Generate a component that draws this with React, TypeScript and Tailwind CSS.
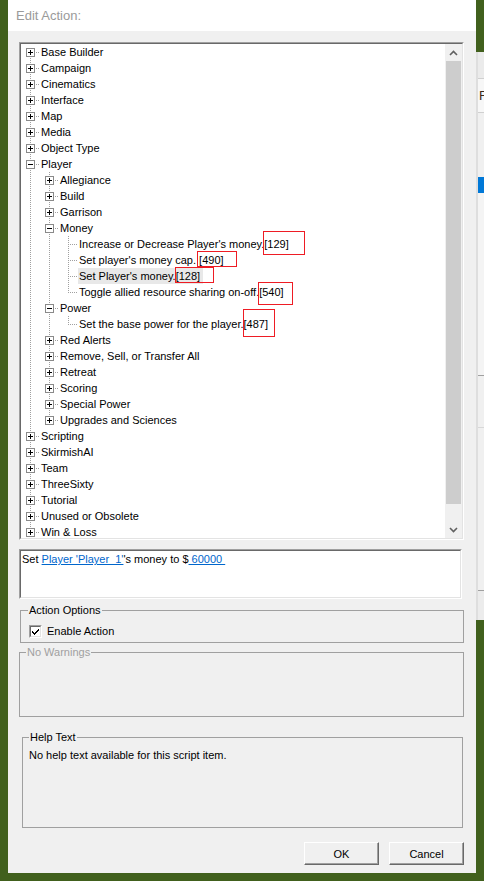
import React from "react";

type Row = {
  l: number;
  e?: "+" | "-";
  t: string;
  tag?: string;
  box?: [number, number, number, number]; // left, top, w, h
  hl?: boolean;
};

const rows: Row[] = [
  { l: 0, e: "+", t: "Base Builder" },
  { l: 0, e: "+", t: "Campaign" },
  { l: 0, e: "+", t: "Cinematics" },
  { l: 0, e: "+", t: "Interface" },
  { l: 0, e: "+", t: "Map" },
  { l: 0, e: "+", t: "Media" },
  { l: 0, e: "+", t: "Object Type" },
  { l: 0, e: "-", t: "Player" },
  { l: 1, e: "+", t: "Allegiance" },
  { l: 1, e: "+", t: "Build" },
  { l: 1, e: "+", t: "Garrison" },
  { l: 1, e: "-", t: "Money" },
  { l: 2, t: "Increase or Decrease Player's money.", tag: "[129]", box: [-1, -5, 42, 24] },
  { l: 2, t: "Set player's money cap.\u00a0", tag: "[490]", box: [-2, -1, 40, 16] },
  { l: 2, t: "Set Player's money.", tag: "[128]", box: [-1, -1, 39, 16], hl: true },
  { l: 2, t: "Toggle allied resource sharing on-off.", tag: "[540]", box: [-1, -2, 35, 23] },
  { l: 1, e: "-", t: "Power" },
  { l: 2, t: "Set the base power for the player.", tag: "[487]", box: [-1, -7, 32, 28] },
  { l: 1, e: "+", t: "Red Alerts" },
  { l: 1, e: "+", t: "Remove, Sell, or Transfer All" },
  { l: 1, e: "+", t: "Retreat" },
  { l: 1, e: "+", t: "Scoring" },
  { l: 1, e: "+", t: "Special Power" },
  { l: 1, e: "+", t: "Upgrades and Sciences" },
  { l: 0, e: "+", t: "Scripting" },
  { l: 0, e: "+", t: "SkirmishAI" },
  { l: 0, e: "+", t: "Team" },
  { l: 0, e: "+", t: "ThreeSixty" },
  { l: 0, e: "+", t: "Tutorial" },
  { l: 0, e: "+", t: "Unused or Obsolete" },
  { l: 0, e: "+", t: "Win & Loss" },
];

function hasNext(i: number): boolean {
  const L = rows[i].l;
  for (let j = i + 1; j < rows.length; j++) {
    if (rows[j].l < L) return false;
    if (rows[j].l === L) return true;
  }
  return true;
}

function ancestor(i: number, d: number): number {
  for (let j = i - 1; j >= 0; j--) if (rows[j].l === d) return j;
  return 0;
}

const LINE = "#a0a0a0";

function RowLines({ i }: { i: number }) {
  const r = rows[i];
  const cx = (d: number) => 9 + 19 * d;
  const w = 19 + 19 * r.l;
  const c = cx(r.l);
  const parts: React.ReactNode[] = [];
  for (let d = 0; d < r.l; d++) {
    if (hasNext(ancestor(i, d))) {
      parts.push(
        <line key={"v" + d} x1={cx(d) + 0.5} y1={0} x2={cx(d) + 0.5} y2={16} stroke={LINE} strokeDasharray="1 1" />
      );
    }
  }
  if (i !== 0) {
    parts.push(<line key="top" x1={c + 0.5} y1={0} x2={c + 0.5} y2={8} stroke={LINE} strokeDasharray="1 1" />);
  }
  if (hasNext(i)) {
    parts.push(<line key="bot" x1={c + 0.5} y1={8} x2={c + 0.5} y2={16} stroke={LINE} strokeDasharray="1 1" />);
  }
  parts.push(<line key="h" x1={c} y1={8.5} x2={c + 10} y2={8.5} stroke={LINE} strokeDasharray="1 1" />);
  if (r.e) {
    parts.push(
      <g key="box">
        <rect x={c - 3.5} y={4.5} width={8} height={8} fill="#ffffff" stroke="#8a8a8a" />
        <rect x={c - 2} y={8} width={5} height={1} fill="#000" />
        {r.e === "+" && <rect x={c} y={6} width={1} height={5} fill="#000" />}
      </g>
    );
  }
  return (
    <svg width={w} height={16} className="shrink-0" shapeRendering="crispEdges">
      {parts}
    </svg>
  );
}

function TreeRow({ i }: { i: number }) {
  const r = rows[i];
  return (
    <div className="flex h-[16px] shrink-0 whitespace-nowrap">
      <RowLines i={i} />
      <div className={"flex h-[16px] pl-[1px] pr-[3px] " + (r.hl ? "bg-[#e8e8e8]" : "")}>
        <span className="leading-[16px]">{r.t}</span>
        {r.tag && (
          <span className="relative leading-[16px]">
            {r.tag}
            {r.box && (
              <span
                className="absolute z-10 border border-[#ee1c24]"
                style={{ left: r.box[0], top: r.box[1], width: r.box[2], height: r.box[3] }}
              />
            )}
          </span>
        )}
      </div>
    </div>
  );
}

function Chevron({ up }: { up: boolean }) {
  return (
    <svg width="9" height="6" viewBox="0 0 9 6">
      <path
        d={up ? "M1 5 L4.5 1.5 L8 5" : "M1 1 L4.5 4.5 L8 1"}
        fill="none"
        stroke="#606060"
        strokeWidth="1.6"
      />
    </svg>
  );
}

function Scrollbar() {
  return (
    <div className="w-[17px] shrink-0 flex flex-col bg-[#f0f0f0]">
      <div className="h-[17px] flex items-center justify-center">
        <Chevron up />
      </div>
      <div className="flex-1 flex flex-col">
        <div className="h-[443px] mx-[1px] bg-[#cdcdcd]" />
      </div>
      <div className="h-[17px] flex items-center justify-center">
        <Chevron up={false} />
      </div>
    </div>
  );
}

function Sunken({ className, children }: { className: string; children: React.ReactNode }) {
  return (
    <div className={"border-t border-l border-[#a0a0a0] border-b border-r border-b-white border-r-white " + className}>
      <div className="h-full w-full border-t border-l border-[#696969] border-b border-r border-b-[#e3e3e3] border-r-[#e3e3e3] bg-white">
        {children}
      </div>
    </div>
  );
}

function CheckBox() {
  return (
    <div className="w-[13px] h-[13px] border-t border-l border-[#a0a0a0] border-b border-r border-b-white border-r-white">
      <div className="w-full h-full border-t border-l border-[#696969] border-b border-r border-b-[#e3e3e3] border-r-[#e3e3e3] bg-white flex items-center justify-center">
        <svg width="9" height="9" viewBox="0 0 9 9" shapeRendering="crispEdges">
          <path d="M1 4 L1 6 L3 8 L8 3 L8 1 L3 6 Z" fill="#000" />
        </svg>
      </div>
    </div>
  );
}

function Button({ label }: { label: string }) {
  return (
    <div className="w-[75px] h-[23px] border-t border-l border-white border-r border-b border-r-[#696969] border-b-[#696969] bg-[#f0f0f0] shadow-[inset_-1px_-1px_0_#a0a0a0] flex items-center justify-center leading-[14px] text-black">
      {label}
    </div>
  );
}

const GREEN = "bg-[#41601d]";

export default function App() {
  return (
    <div className={"w-[484px] h-[881px] flex overflow-hidden text-[11px] text-black font-['Liberation_Sans',Arial,sans-serif] " + GREEN}>
      <div className="w-[8px] shrink-0" />
      {/* dialog */}
      <div className="w-[468px] h-[873px] shrink-0 flex flex-col bg-[#f0f0f0]">
        <div className="h-[31px] shrink-0 bg-white flex items-center pl-[8px] text-[13px] text-[#9a9a9a]">
          Edit Action:
        </div>
        <div className="flex-1 flex flex-col">
          {/* tree */}
          <Sunken className="ml-[11px] mt-[11px] w-[445px] h-[498px] shrink-0">
            <div className="flex h-full">
              <div className="flex-1 overflow-hidden flex flex-col">
                {rows.map((_, i) => (
                  <TreeRow key={i} i={i} />
                ))}
              </div>
              <Scrollbar />
            </div>
          </Sunken>
          {/* description */}
          <Sunken className="ml-[11px] mt-[9px] w-[443px] h-[50px] shrink-0">
            <div className="pl-[1px] leading-[16px] whitespace-nowrap">
              Set <span className="text-[#0066cc] underline">Player 'Player_1'</span>'s money to $
              <span className="text-[#0066cc] underline">{"\u00a060000\u00a0"}</span>
            </div>
          </Sunken>
          {/* action options */}
          <fieldset className="ml-[12px] mt-[4px] w-[444px] h-[40px] shrink-0 border border-[#a0a0a0]">
            <legend className="ml-[7px] px-[1px] leading-[14px]">Action Options</legend>
            <div className="pl-[8px] pt-[7px] flex items-center">
              <CheckBox />
              <span className="ml-[5px] leading-[14px]">Enable Action</span>
            </div>
          </fieldset>
          {/* no warnings */}
          <fieldset className="ml-[11px] mt-[2px] w-[445px] h-[72px] shrink-0 border border-[#a0a0a0]">
            <legend className="ml-[6px] px-[1px] leading-[14px] text-[#a0a0a0]">No Warnings</legend>
          </fieldset>
          {/* help text */}
          <fieldset className="ml-[14px] mt-[13px] w-[441px] h-[98px] shrink-0 border border-[#a0a0a0]">
            <legend className="ml-[6px] px-[1px] leading-[14px]">Help Text</legend>
            <div className="pl-[6px] pt-[3px] leading-[16px]">No help text available for this script item.</div>
          </fieldset>
          {/* buttons */}
          <div className="mt-[14px] flex justify-end gap-[10px] pr-[12px]">
            <Button label="OK" />
            <Button label="Cancel" />
          </div>
        </div>
      </div>
      {/* right background window strip */}
      <div className="w-[8px] shrink-0 flex flex-col">
        <div className="h-[52px] shrink-0" />
        <div className="h-[568px] shrink-0 flex flex-col bg-[#f0f0f0] border-l-2 border-[#dedede] overflow-hidden">
          <div className="h-[26px] shrink-0 bg-[#ebebeb]" />
          <div className="h-[1px] shrink-0 bg-[#d0d0d0]" />
          <div className="h-[33px] shrink-0 bg-[#f7f7f7] flex items-center pl-[1px] text-[13px] text-[#3a2a1a] leading-[14px]">
            F
          </div>
          <div className="h-[1px] shrink-0 bg-[#d0d0d0]" />
          <div className="h-[64px] shrink-0 bg-[#f0f0f0]" />
          <div className="h-[16px] shrink-0 bg-[#0078d7]" />
          <div className="h-[182px] shrink-0 bg-[#f4f4f4]" />
          <div className="h-[1px] shrink-0 bg-[#a0a0a0]" />
          <div className="h-[51px] shrink-0 bg-[#f0f0f0]" />
          <div className="h-[1px] shrink-0 bg-[#d8d8d8]" />
          <div className="h-[162px] shrink-0 bg-[#f0f0f0]" />
          <div className="h-[1px] shrink-0 bg-[#a0a0a0]" />
          <div className="flex-1 bg-[#ececec]" />
        </div>
        <div className="flex-1" />
      </div>
    </div>
  );
}
